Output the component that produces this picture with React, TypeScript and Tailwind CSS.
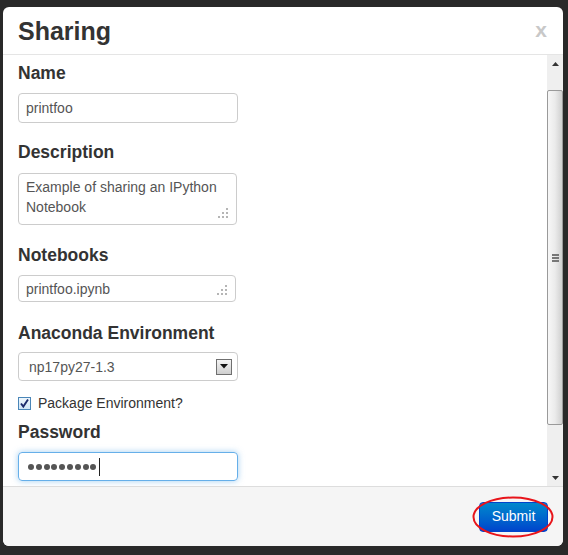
import React from "react";

const font = { fontFamily: '"Liberation Sans", Arial, sans-serif' };

function Grip() {
  return (
    <svg width="12" height="12" viewBox="0 0 12 12" className="absolute right-[7px] bottom-[5px]">
      {[
        [9, 1],
        [5, 5],
        [9, 5],
        [1, 9],
        [5, 9],
        [9, 9],
      ].map(([x, y], i) => (
        <rect key={i} x={x} y={y} width="2" height="2" fill="#b5b5b5" />
      ))}
    </svg>
  );
}

function Label({ children, className = "" }: { children: React.ReactNode; className?: string }) {
  return <div className={`text-[17.5px] font-bold leading-[20px] text-[#333] ${className}`}>{children}</div>;
}

export default function App() {
  return (
    <div className="w-[568px] h-[555px] bg-[#292929] pt-[7px] pl-[3px] relative" style={font}>
      <div className="w-[560px] h-[539px] bg-white rounded-[6px] flex flex-col overflow-hidden">
        {/* Header */}
        <div className="h-[48px] border-b border-[#e5e5e5] pl-[15px] pr-[16px] flex items-center justify-between shrink-0">
          <div className="text-[25px] font-bold text-[#333] leading-[30px] pt-[1px]">Sharing</div>
          <div className="text-[21px] font-bold text-[#c8c8c8] leading-[22px] -mt-[1px]">x</div>
        </div>
        {/* Body */}
        <div className="flex-1 flex min-h-0">
          <div className="flex-1 pl-[15px] pt-[8px] text-[14px]">
            <Label className="mb-[10px]">Name</Label>
            <div className="w-[220px] h-[30px] border border-[#ccc] rounded-[4px] pl-[7px] flex items-center text-[#555] leading-[20px]">
              printfoo
            </div>
            <Label className="mt-[19px] mb-[11px]">Description</Label>
            <div className="relative w-[219px] h-[52px] border border-[#ccc] rounded-[4px] pl-[7px] pt-[3px] text-[#555] leading-[20px]">
              Example of sharing an IPython
              <br />
              Notebook
              <Grip />
            </div>
            <Label className="mt-[20px] mb-[10px]">Notebooks</Label>
            <div className="relative w-[218px] h-[27px] border border-[#ccc] rounded-[4px] pl-[7px] flex items-center text-[#555] leading-[20px]">
              printfoo.ipynb
              <Grip />
            </div>
            <Label className="mt-[21px] mb-[9px]">Anaconda Environment</Label>
            <div className="w-[220px] h-[29px] border border-[#ccc] rounded-[4px] pl-[10px] pr-[4px] flex items-center justify-between text-[#555] leading-[20px]">
              <span>np17py27-1.3</span>
              <div className="w-[16px] h-[16px] border border-[#6f6f6f] bg-gradient-to-b from-[#f4f4f4] to-[#cfcfcf] flex items-center justify-center mr-[1px]">
                <svg width="8" height="5" viewBox="0 0 8 5">
                  <path d="M0 0 L8 0 L4 4.5 Z" fill="#111" />
                </svg>
              </div>
            </div>
            <div className="mt-[12px] h-[20px] flex items-center gap-[7px]">
              <div className="w-[13px] h-[13px] border border-[#4a86b8] bg-gradient-to-b from-[#eef6fc] to-[#cfe5f6] flex items-center justify-center">
                <svg width="11" height="11" viewBox="0 0 11 11">
                  <path d="M2 5.5 L4.3 8.5 L9 1.5" stroke="#1b2a6b" strokeWidth="1.9" fill="none" />
                </svg>
              </div>
              <span className="text-[#333] leading-[20px]">Package Environment?</span>
            </div>
            <Label className="mt-[9px] mb-[10px]">Password</Label>
            <div className="w-[220px] h-[29px] border border-[#66afe9] rounded-[4px] pl-[9px] flex items-center gap-[1.8px] shadow-[0_0_6px_rgba(102,175,233,0.6)]">
              {Array.from({ length: 9 }).map((_, i) => (
                <div key={i} className="w-[6px] h-[6px] rounded-full bg-[#555]" />
              ))}
              <div className="w-[1px] h-[18px] bg-[#222] ml-[0.5px]" />
            </div>
          </div>
          {/* Scrollbar */}
          <div className="w-[16px] bg-[#efefef] flex flex-col items-stretch shrink-0">
            <div className="h-[17px] flex items-center justify-center">
              <svg width="7" height="4" viewBox="0 0 7 4">
                <path d="M0 4 L7 4 L3.5 0 Z" fill="#333" />
              </svg>
            </div>
            <div className="h-[18px]" />
            <div className="h-[335px] border border-[#9a9a9a] rounded-[2px] bg-gradient-to-r from-[#f7f7f7] via-[#ebebeb] to-[#d0d0d0] flex items-center justify-center">
              <div className="flex flex-col gap-[1px]">
                <div className="w-[7px] h-[2px] bg-[#777]" />
                <div className="w-[7px] h-[2px] bg-[#777]" />
                <div className="w-[7px] h-[2px] bg-[#777]" />
              </div>
            </div>
            <div className="flex-1" />
            <div className="h-[17px] flex items-center justify-center">
              <svg width="7" height="4" viewBox="0 0 7 4">
                <path d="M0 0 L7 0 L3.5 4 Z" fill="#333" />
              </svg>
            </div>
          </div>
        </div>
        {/* Footer */}
        <div className="h-[60px] shrink-0 bg-[#f5f5f5] border-t border-[#ddd] flex items-center justify-end pr-[15px]">
          <div className="relative">
            <div className="w-[69px] h-[30px] rounded-[4px] border border-[#0044cc] bg-gradient-to-b from-[#0088cc] to-[#0044cc] flex items-center justify-center text-white text-[14px]">
              Submit
            </div>
            <svg
              width="82"
              height="42"
              viewBox="0 0 82 42"
              className="absolute left-[-7px] top-[-6px] pointer-events-none"
            >
              <ellipse cx="41" cy="21" rx="39.5" ry="19.5" fill="none" stroke="#e8141a" strokeWidth="2" />
            </svg>
          </div>
        </div>
      </div>
    </div>
  );
}
